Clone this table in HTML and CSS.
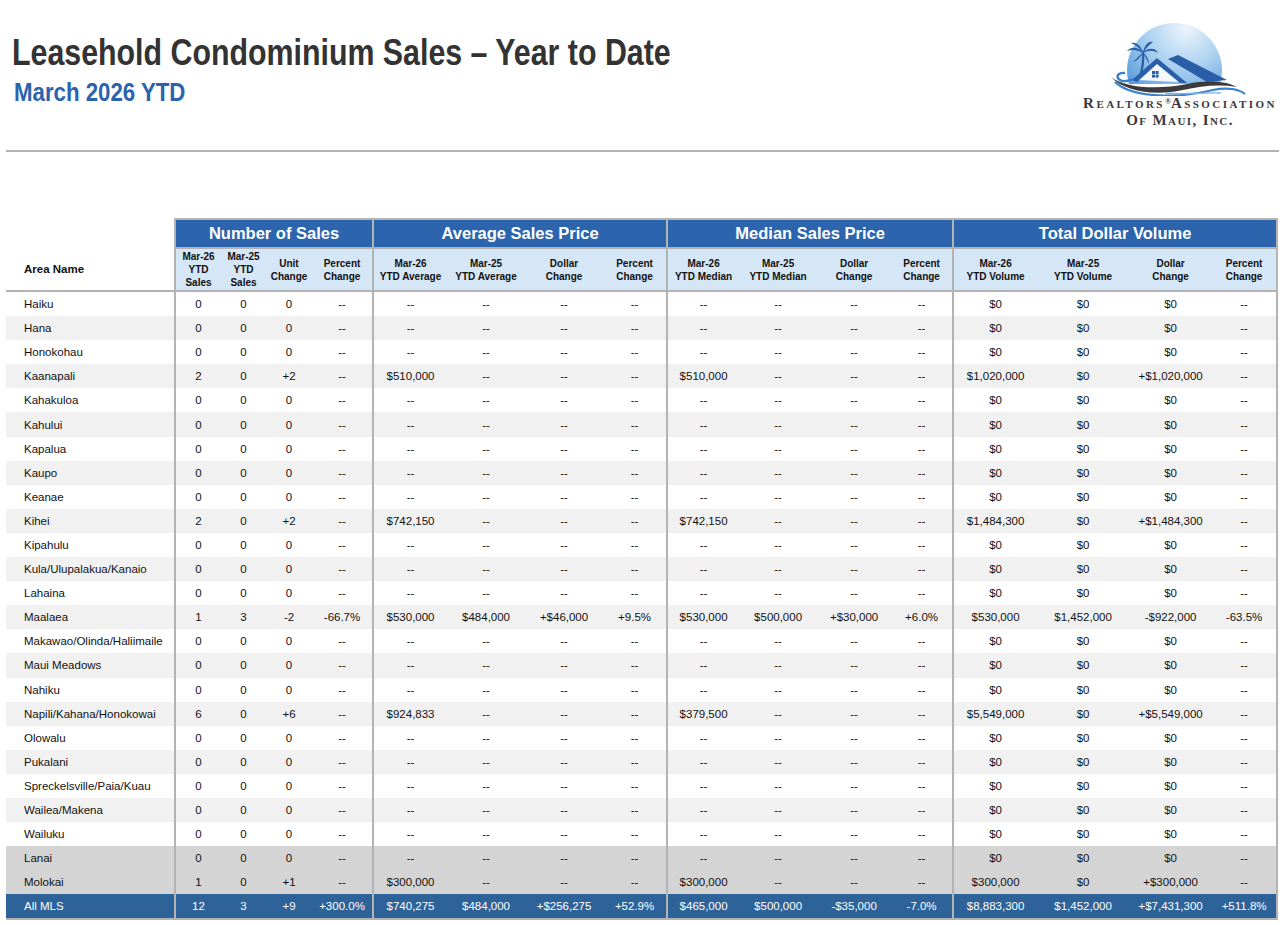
FILE: index.html
```html
<!DOCTYPE html>
<html lang="en">
<head>
<meta charset="utf-8">
<title>Leasehold Condominium Sales – Year to Date</title>
<link rel="stylesheet" href="styles.css">
</head>
<body>
<div class="page">
  <header class="top">
    <div class="titles">
      <h1 class="title">Leasehold Condominium Sales – Year to Date</h1>
      <div class="subtitle">March 2026 YTD</div>
    </div>
    <div class="logo">
      <svg class="logo-mark" viewBox="0 0 190 76" width="190" height="76" aria-hidden="true">
        <defs>
          <radialGradient id="sky" cx="0.62" cy="0.05" r="0.95">
            <stop offset="0" stop-color="#eef5fc"/>
            <stop offset="0.45" stop-color="#a9d0f0"/>
            <stop offset="1" stop-color="#3f8bd6"/>
          </radialGradient>
          <clipPath id="skyclip"><rect x="0" y="0" width="190" height="64"/></clipPath>
        </defs>
        <circle cx="89.5" cy="50.5" r="47.5" fill="url(#sky)" clip-path="url(#skyclip)"/>
        <path d="M52 60 L72 43 L95 62 Z" fill="#f4f8fc"/>
        <path d="M47 60 L72 38 L102 63 L95 63 L72 44 L52 62 Z" fill="#2a5ea8"/>
        <rect x="67" y="51" width="3" height="3" fill="#2a5ea8"/>
        <rect x="70.6" y="51" width="3" height="3" fill="#2a5ea8"/>
        <rect x="67" y="54.6" width="3" height="3" fill="#2a5ea8"/>
        <rect x="70.6" y="54.6" width="3" height="3" fill="#2a5ea8"/>
        <path d="M83 39 L93 35 L142 60 L122 62 Z" fill="#2a5ea8"/>
        <path d="M55 58 C57 50 59 42 58 33" stroke="#2a5ea8" stroke-width="2.4" fill="none"/>
        <path d="M58 32 C52 26 45 27 42 31 C48 29 53 30 58 33 Z" fill="#2a5ea8"/>
        <path d="M58 32 C55 24 50 22 46 23 C51 25 55 28 58 33 Z" fill="#2a5ea8"/>
        <path d="M58 32 C60 24 64 21 68 22 C64 25 61 28 58 33 Z" fill="#2a5ea8"/>
        <path d="M58 32 C64 27 71 28 73 33 C68 30 63 30 58 33 Z" fill="#2a5ea8"/>
        <path d="M58 32 C56 37 52 41 48 42 C52 38 55 35 58 32 Z" fill="#2a5ea8"/>
        <path d="M58 32 C62 36 64 40 64 44 C62 40 60 36 58 32 Z" fill="#2a5ea8"/>
        <path d="M26 57 C40 68 72 70 102 64 C122 60 140 61 152 67 C134 64 116 66 98 70 C70 76 40 72 26 57 Z" fill="#3b3b3d"/>
        <path d="M30 62 C48 79 96 78 128 70 C142 67 154 69 160 74" stroke="#3580cf" stroke-width="2.2" fill="none"/>
        <path d="M40 53 C33 52 30 57 35 60 C38 62 44 61 48 59" stroke="#3580cf" stroke-width="2.4" fill="none"/>
        <path d="M80 73 C100 75 120 72 136 73" stroke="#7fb4e6" stroke-width="1.4" fill="none"/>
      </svg>
      <div class="logo-name">Realtors<span class="reg">®</span>Association</div>
      <div class="logo-name second">Of Maui, Inc.</div>
    </div>
  </header>
  <div class="rule"></div>
  <div class="table-wrap">
    <table class="stats">
      <colgroup>
        <col><col><col><col><col><col><col><col><col><col><col><col><col><col><col><col><col>
      </colgroup>
      <thead>
        <tr class="grp">
          <th class="blank"></th>
          <th colspan="4">Number of Sales</th>
          <th colspan="4">Average Sales Price</th>
          <th colspan="4">Median Sales Price</th>
          <th colspan="4">Total Dollar Volume</th>
        </tr>
        <tr class="sub">
          <th class="area-head">Area Name</th>
          <th>Mar-26<br>YTD<br>Sales</th>
          <th>Mar-25<br>YTD<br>Sales</th>
          <th>Unit<br>Change</th>
          <th>Percent<br>Change</th>
          <th>Mar-26<br>YTD Average</th>
          <th>Mar-25<br>YTD Average</th>
          <th>Dollar<br>Change</th>
          <th>Percent<br>Change</th>
          <th>Mar-26<br>YTD Median</th>
          <th>Mar-25<br>YTD Median</th>
          <th>Dollar<br>Change</th>
          <th>Percent<br>Change</th>
          <th>Mar-26<br>YTD Volume</th>
          <th>Mar-25<br>YTD Volume</th>
          <th>Dollar<br>Change</th>
          <th>Percent<br>Change</th>
        </tr>
      </thead>
      <tbody>
        <tr><td>Haiku</td><td>0</td><td>0</td><td>0</td><td>--</td><td>--</td><td>--</td><td>--</td><td>--</td><td>--</td><td>--</td><td>--</td><td>--</td><td>$0</td><td>$0</td><td>$0</td><td>--</td></tr>
        <tr><td>Hana</td><td>0</td><td>0</td><td>0</td><td>--</td><td>--</td><td>--</td><td>--</td><td>--</td><td>--</td><td>--</td><td>--</td><td>--</td><td>$0</td><td>$0</td><td>$0</td><td>--</td></tr>
        <tr><td>Honokohau</td><td>0</td><td>0</td><td>0</td><td>--</td><td>--</td><td>--</td><td>--</td><td>--</td><td>--</td><td>--</td><td>--</td><td>--</td><td>$0</td><td>$0</td><td>$0</td><td>--</td></tr>
        <tr><td>Kaanapali</td><td>2</td><td>0</td><td>+2</td><td>--</td><td>$510,000</td><td>--</td><td>--</td><td>--</td><td>$510,000</td><td>--</td><td>--</td><td>--</td><td>$1,020,000</td><td>$0</td><td>+$1,020,000</td><td>--</td></tr>
        <tr><td>Kahakuloa</td><td>0</td><td>0</td><td>0</td><td>--</td><td>--</td><td>--</td><td>--</td><td>--</td><td>--</td><td>--</td><td>--</td><td>--</td><td>$0</td><td>$0</td><td>$0</td><td>--</td></tr>
        <tr><td>Kahului</td><td>0</td><td>0</td><td>0</td><td>--</td><td>--</td><td>--</td><td>--</td><td>--</td><td>--</td><td>--</td><td>--</td><td>--</td><td>$0</td><td>$0</td><td>$0</td><td>--</td></tr>
        <tr><td>Kapalua</td><td>0</td><td>0</td><td>0</td><td>--</td><td>--</td><td>--</td><td>--</td><td>--</td><td>--</td><td>--</td><td>--</td><td>--</td><td>$0</td><td>$0</td><td>$0</td><td>--</td></tr>
        <tr><td>Kaupo</td><td>0</td><td>0</td><td>0</td><td>--</td><td>--</td><td>--</td><td>--</td><td>--</td><td>--</td><td>--</td><td>--</td><td>--</td><td>$0</td><td>$0</td><td>$0</td><td>--</td></tr>
        <tr><td>Keanae</td><td>0</td><td>0</td><td>0</td><td>--</td><td>--</td><td>--</td><td>--</td><td>--</td><td>--</td><td>--</td><td>--</td><td>--</td><td>$0</td><td>$0</td><td>$0</td><td>--</td></tr>
        <tr><td>Kihei</td><td>2</td><td>0</td><td>+2</td><td>--</td><td>$742,150</td><td>--</td><td>--</td><td>--</td><td>$742,150</td><td>--</td><td>--</td><td>--</td><td>$1,484,300</td><td>$0</td><td>+$1,484,300</td><td>--</td></tr>
        <tr><td>Kipahulu</td><td>0</td><td>0</td><td>0</td><td>--</td><td>--</td><td>--</td><td>--</td><td>--</td><td>--</td><td>--</td><td>--</td><td>--</td><td>$0</td><td>$0</td><td>$0</td><td>--</td></tr>
        <tr><td>Kula/Ulupalakua/Kanaio</td><td>0</td><td>0</td><td>0</td><td>--</td><td>--</td><td>--</td><td>--</td><td>--</td><td>--</td><td>--</td><td>--</td><td>--</td><td>$0</td><td>$0</td><td>$0</td><td>--</td></tr>
        <tr><td>Lahaina</td><td>0</td><td>0</td><td>0</td><td>--</td><td>--</td><td>--</td><td>--</td><td>--</td><td>--</td><td>--</td><td>--</td><td>--</td><td>$0</td><td>$0</td><td>$0</td><td>--</td></tr>
        <tr><td>Maalaea</td><td>1</td><td>3</td><td>-2</td><td>-66.7%</td><td>$530,000</td><td>$484,000</td><td>+$46,000</td><td>+9.5%</td><td>$530,000</td><td>$500,000</td><td>+$30,000</td><td>+6.0%</td><td>$530,000</td><td>$1,452,000</td><td>-$922,000</td><td>-63.5%</td></tr>
        <tr><td>Makawao/Olinda/Haliimaile</td><td>0</td><td>0</td><td>0</td><td>--</td><td>--</td><td>--</td><td>--</td><td>--</td><td>--</td><td>--</td><td>--</td><td>--</td><td>$0</td><td>$0</td><td>$0</td><td>--</td></tr>
        <tr><td>Maui Meadows</td><td>0</td><td>0</td><td>0</td><td>--</td><td>--</td><td>--</td><td>--</td><td>--</td><td>--</td><td>--</td><td>--</td><td>--</td><td>$0</td><td>$0</td><td>$0</td><td>--</td></tr>
        <tr><td>Nahiku</td><td>0</td><td>0</td><td>0</td><td>--</td><td>--</td><td>--</td><td>--</td><td>--</td><td>--</td><td>--</td><td>--</td><td>--</td><td>$0</td><td>$0</td><td>$0</td><td>--</td></tr>
        <tr><td>Napili/Kahana/Honokowai</td><td>6</td><td>0</td><td>+6</td><td>--</td><td>$924,833</td><td>--</td><td>--</td><td>--</td><td>$379,500</td><td>--</td><td>--</td><td>--</td><td>$5,549,000</td><td>$0</td><td>+$5,549,000</td><td>--</td></tr>
        <tr><td>Olowalu</td><td>0</td><td>0</td><td>0</td><td>--</td><td>--</td><td>--</td><td>--</td><td>--</td><td>--</td><td>--</td><td>--</td><td>--</td><td>$0</td><td>$0</td><td>$0</td><td>--</td></tr>
        <tr><td>Pukalani</td><td>0</td><td>0</td><td>0</td><td>--</td><td>--</td><td>--</td><td>--</td><td>--</td><td>--</td><td>--</td><td>--</td><td>--</td><td>$0</td><td>$0</td><td>$0</td><td>--</td></tr>
        <tr><td>Spreckelsville/Paia/Kuau</td><td>0</td><td>0</td><td>0</td><td>--</td><td>--</td><td>--</td><td>--</td><td>--</td><td>--</td><td>--</td><td>--</td><td>--</td><td>$0</td><td>$0</td><td>$0</td><td>--</td></tr>
        <tr><td>Wailea/Makena</td><td>0</td><td>0</td><td>0</td><td>--</td><td>--</td><td>--</td><td>--</td><td>--</td><td>--</td><td>--</td><td>--</td><td>--</td><td>$0</td><td>$0</td><td>$0</td><td>--</td></tr>
        <tr><td>Wailuku</td><td>0</td><td>0</td><td>0</td><td>--</td><td>--</td><td>--</td><td>--</td><td>--</td><td>--</td><td>--</td><td>--</td><td>--</td><td>$0</td><td>$0</td><td>$0</td><td>--</td></tr>
        <tr class="island"><td>Lanai</td><td>0</td><td>0</td><td>0</td><td>--</td><td>--</td><td>--</td><td>--</td><td>--</td><td>--</td><td>--</td><td>--</td><td>--</td><td>$0</td><td>$0</td><td>$0</td><td>--</td></tr>
        <tr class="island"><td>Molokai</td><td>1</td><td>0</td><td>+1</td><td>--</td><td>$300,000</td><td>--</td><td>--</td><td>--</td><td>$300,000</td><td>--</td><td>--</td><td>--</td><td>$300,000</td><td>$0</td><td>+$300,000</td><td>--</td></tr>
        <tr class="total"><td>All MLS</td><td>12</td><td>3</td><td>+9</td><td>+300.0%</td><td>$740,275</td><td>$484,000</td><td>+$256,275</td><td>+52.9%</td><td>$465,000</td><td>$500,000</td><td>-$35,000</td><td>-7.0%</td><td>$8,883,300</td><td>$1,452,000</td><td>+$7,431,300</td><td>+511.8%</td></tr>
      </tbody>
    </table>
  </div>
</div>
</body>
</html>
```

FILE: styles.css
```css
* { box-sizing: border-box; }

body {
  margin: 0;
  background: #ffffff;
  font-family: "Liberation Sans", Arial, Helvetica, sans-serif;
  color: #111111;
}

.page {
  padding: 0 6px;
}

/* ---------- header ---------- */
.top {
  display: flex;
  justify-content: space-between;
  align-items: flex-start;
  height: 150px;
}

.titles {
  padding: 34px 0 0 6px;
}

/* condensed headline face emulated with a horizontal squeeze */
.title {
  margin: 0;
  font-family: "Liberation Sans", Arial, sans-serif;
  font-weight: 700;
  font-size: 37px;
  line-height: 37px;
  color: #333333;
  white-space: nowrap;
  transform: scaleX(0.82);
  transform-origin: 0 50%;
}

.subtitle {
  margin: 8px 0 0 2px;
  font-family: "Liberation Sans", Arial, sans-serif;
  font-weight: 700;
  font-size: 26px;
  line-height: 26px;
  color: #2b63ae;
  white-space: nowrap;
  transform: scaleX(0.855);
  transform-origin: 0 50%;
}

.logo {
  margin: 20px 4px 0 0;
  width: 190px;
  display: flex;
  flex-direction: column;
  align-items: center;
}

.logo-mark {
  display: block;
  width: 190px;
  height: 76px;
  margin-bottom: -2px;
}

.logo-name {
  font-family: "Liberation Serif", "Times New Roman", serif;
  font-variant: small-caps;
  font-weight: 700;
  font-size: 15px;
  line-height: 16.6px;
  color: #3a3a3a;
  white-space: nowrap;
  letter-spacing: 2.45px;
}

.logo-name.second {
  letter-spacing: 1.4px;
}

.logo-name .reg {
  font-size: 8px;
  letter-spacing: 0;
  vertical-align: 4px;
}

.rule {
  height: 2px;
  background: #b3b3b3;
}

/* ---------- table ---------- */
.table-wrap {
  padding-top: 66px;
}

.stats {
  width: 1272px;
  table-layout: fixed;
  border-collapse: separate;
  border-spacing: 0;
}

.stats col:nth-child(1)  { width: 168px; }
.stats col:nth-child(2)  { width: 47px; }
.stats col:nth-child(3)  { width: 45px; }
.stats col:nth-child(4)  { width: 46px; }
.stats col:nth-child(5)  { width: 60px; }
.stats col:nth-child(6)  { width: 75px; }
.stats col:nth-child(7)  { width: 78px; }
.stats col:nth-child(8)  { width: 78px; }
.stats col:nth-child(9)  { width: 63px; }
.stats col:nth-child(10) { width: 73px; }
.stats col:nth-child(11) { width: 78px; }
.stats col:nth-child(12) { width: 74px; }
.stats col:nth-child(13) { width: 61px; }
.stats col:nth-child(14) { width: 85px; }
.stats col:nth-child(15) { width: 92px; }
.stats col:nth-child(16) { width: 83px; }
.stats col:nth-child(17) { width: 66px; }

.stats th,
.stats td {
  padding: 0;
  text-align: center;
  vertical-align: middle;
}

/* group header row */
.grp th {
  height: 31px;
  background: #2c65ae;
  color: #ffffff;
  font-size: 16.5px;
  font-weight: 700;
  border-top: 2px solid #b3b3b3;
  border-bottom: 2px solid #b3b3b3;
  border-left: 2px solid #b3b3b3;
}
.grp th:last-child { border-right: 2px solid #b3b3b3; }
.grp th.blank {
  background: #ffffff;
  border: 0;
}

/* sub header row */
.sub th {
  height: 43px;
  background: #d5e6f6;
  color: #111111;
  font-size: 10px;
  line-height: 13px;
  font-weight: 700;
  border-bottom: 2px solid #b3b3b3;
}
.sub th.area-head {
  background: #ffffff;
  text-align: left;
  padding-left: 18px;
  font-size: 11.5px;
}

/* data rows */
.stats tbody td {
  height: 24.1px;
  font-size: 11.5px;
  color: #111111;
  white-space: nowrap;
}
.stats tbody td:first-child {
  text-align: left;
  padding-left: 18px;
}
.stats tbody tr:nth-child(even) td { background: #f1f1f1; }
.stats tbody tr.island td { background: #d4d4d4; }
.stats tbody tr.total td {
  background: #2e6399;
  color: #ffffff;
  height: 26.1px;
  border-bottom: 2px solid #b3b3b3;
}

.sub th:nth-child(2), .sub th:nth-child(6), .sub th:nth-child(10), .sub th:nth-child(14),
.stats tbody td:nth-child(2), .stats tbody td:nth-child(6), .stats tbody td:nth-child(10), .stats tbody td:nth-child(14) {
  border-left: 2px solid #b3b3b3;
}
.sub th:nth-child(17),
.stats tbody td:nth-child(17) {
  border-right: 2px solid #b3b3b3;
}
```
